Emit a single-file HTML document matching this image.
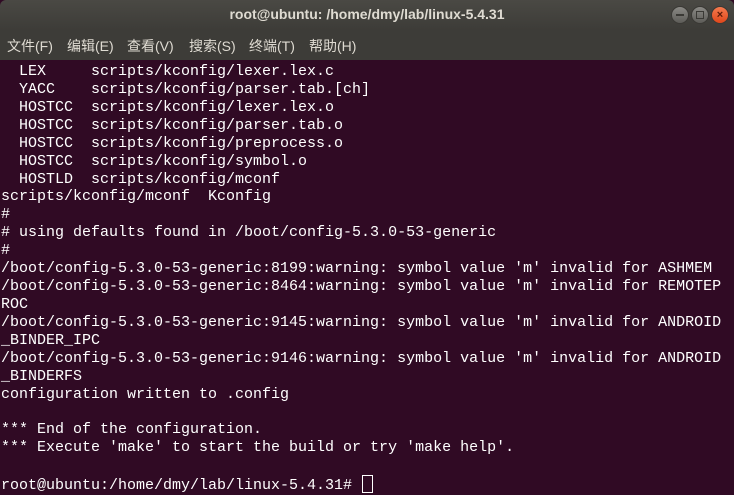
<!DOCTYPE html>
<html><head><meta charset="utf-8"><style>
html,body{margin:0;padding:0;width:734px;height:494px;overflow:hidden;background:#300a24}
#title{position:absolute;left:0;top:0;width:734px;height:30px;background:linear-gradient(#4a4944,#3d3c38);border-radius:6px 6px 0 0;color:#dfdbd2;font:bold 14px "Liberation Sans","Noto Sans CJK SC",sans-serif;text-align:center;line-height:29px}
#menu{position:absolute;left:0;top:30px;width:734px;height:30px;background:#3d3c38;color:#dfdbd2;font:14px "Liberation Sans","Noto Sans CJK SC",sans-serif;line-height:32px}
#menu span{position:absolute;top:0}
.b{position:absolute;top:6px;width:16px;height:16px;border-radius:50%;background:linear-gradient(#8a8985,#5d5c58);border:1px solid #3a3935}
#term{position:absolute;left:1px;top:63px;color:#ffffff;font:15px "Liberation Mono",monospace;line-height:17.92px;white-space:pre}
#cur{display:inline-block;width:9px;height:16px;border:1px solid #fff;vertical-align:-4px;margin-left:1px}
</style></head><body>
<div id="title">root@ubuntu: /home/dmy/lab/linux-5.4.31</div>
<div class="b" style="left:671px"><div style="position:absolute;left:4px;top:7px;width:8px;height:2px;background:#3a3935"></div></div>
<div class="b" style="left:691px"><div style="position:absolute;left:4px;top:4px;width:6px;height:6px;border:1.5px solid #3a3935"></div></div>
<div class="b" style="left:711px;background:linear-gradient(#f57a4e,#e0471b);color:#5a1a08;font:bold 11px 'Liberation Sans',sans-serif;text-align:center;line-height:16px">×</div>
<div id="menu"><span style="left:7px">文件(F)</span><span style="left:67px">编辑(E)</span><span style="left:127px">查看(V)</span><span style="left:189px">搜索(S)</span><span style="left:249px">终端(T)</span><span style="left:309px">帮助(H)</span></div>
<div id="term">  LEX     scripts/kconfig/lexer.lex.c
  YACC    scripts/kconfig/parser.tab.[ch]
  HOSTCC  scripts/kconfig/lexer.lex.o
  HOSTCC  scripts/kconfig/parser.tab.o
  HOSTCC  scripts/kconfig/preprocess.o
  HOSTCC  scripts/kconfig/symbol.o
  HOSTLD  scripts/kconfig/mconf
scripts/kconfig/mconf  Kconfig
#
# using defaults found in /boot/config-5.3.0-53-generic
#
/boot/config-5.3.0-53-generic:8199:warning: symbol value 'm' invalid for ASHMEM
/boot/config-5.3.0-53-generic:8464:warning: symbol value 'm' invalid for REMOTEP
ROC
/boot/config-5.3.0-53-generic:9145:warning: symbol value 'm' invalid for ANDROID
_BINDER_IPC
/boot/config-5.3.0-53-generic:9146:warning: symbol value 'm' invalid for ANDROID
_BINDERFS
configuration written to .config

*** End of the configuration.
*** Execute 'make' to start the build or try 'make help'.

root@ubuntu:/home/dmy/lab/linux-5.4.31# <span id="cur"></span></div>
</body></html>
